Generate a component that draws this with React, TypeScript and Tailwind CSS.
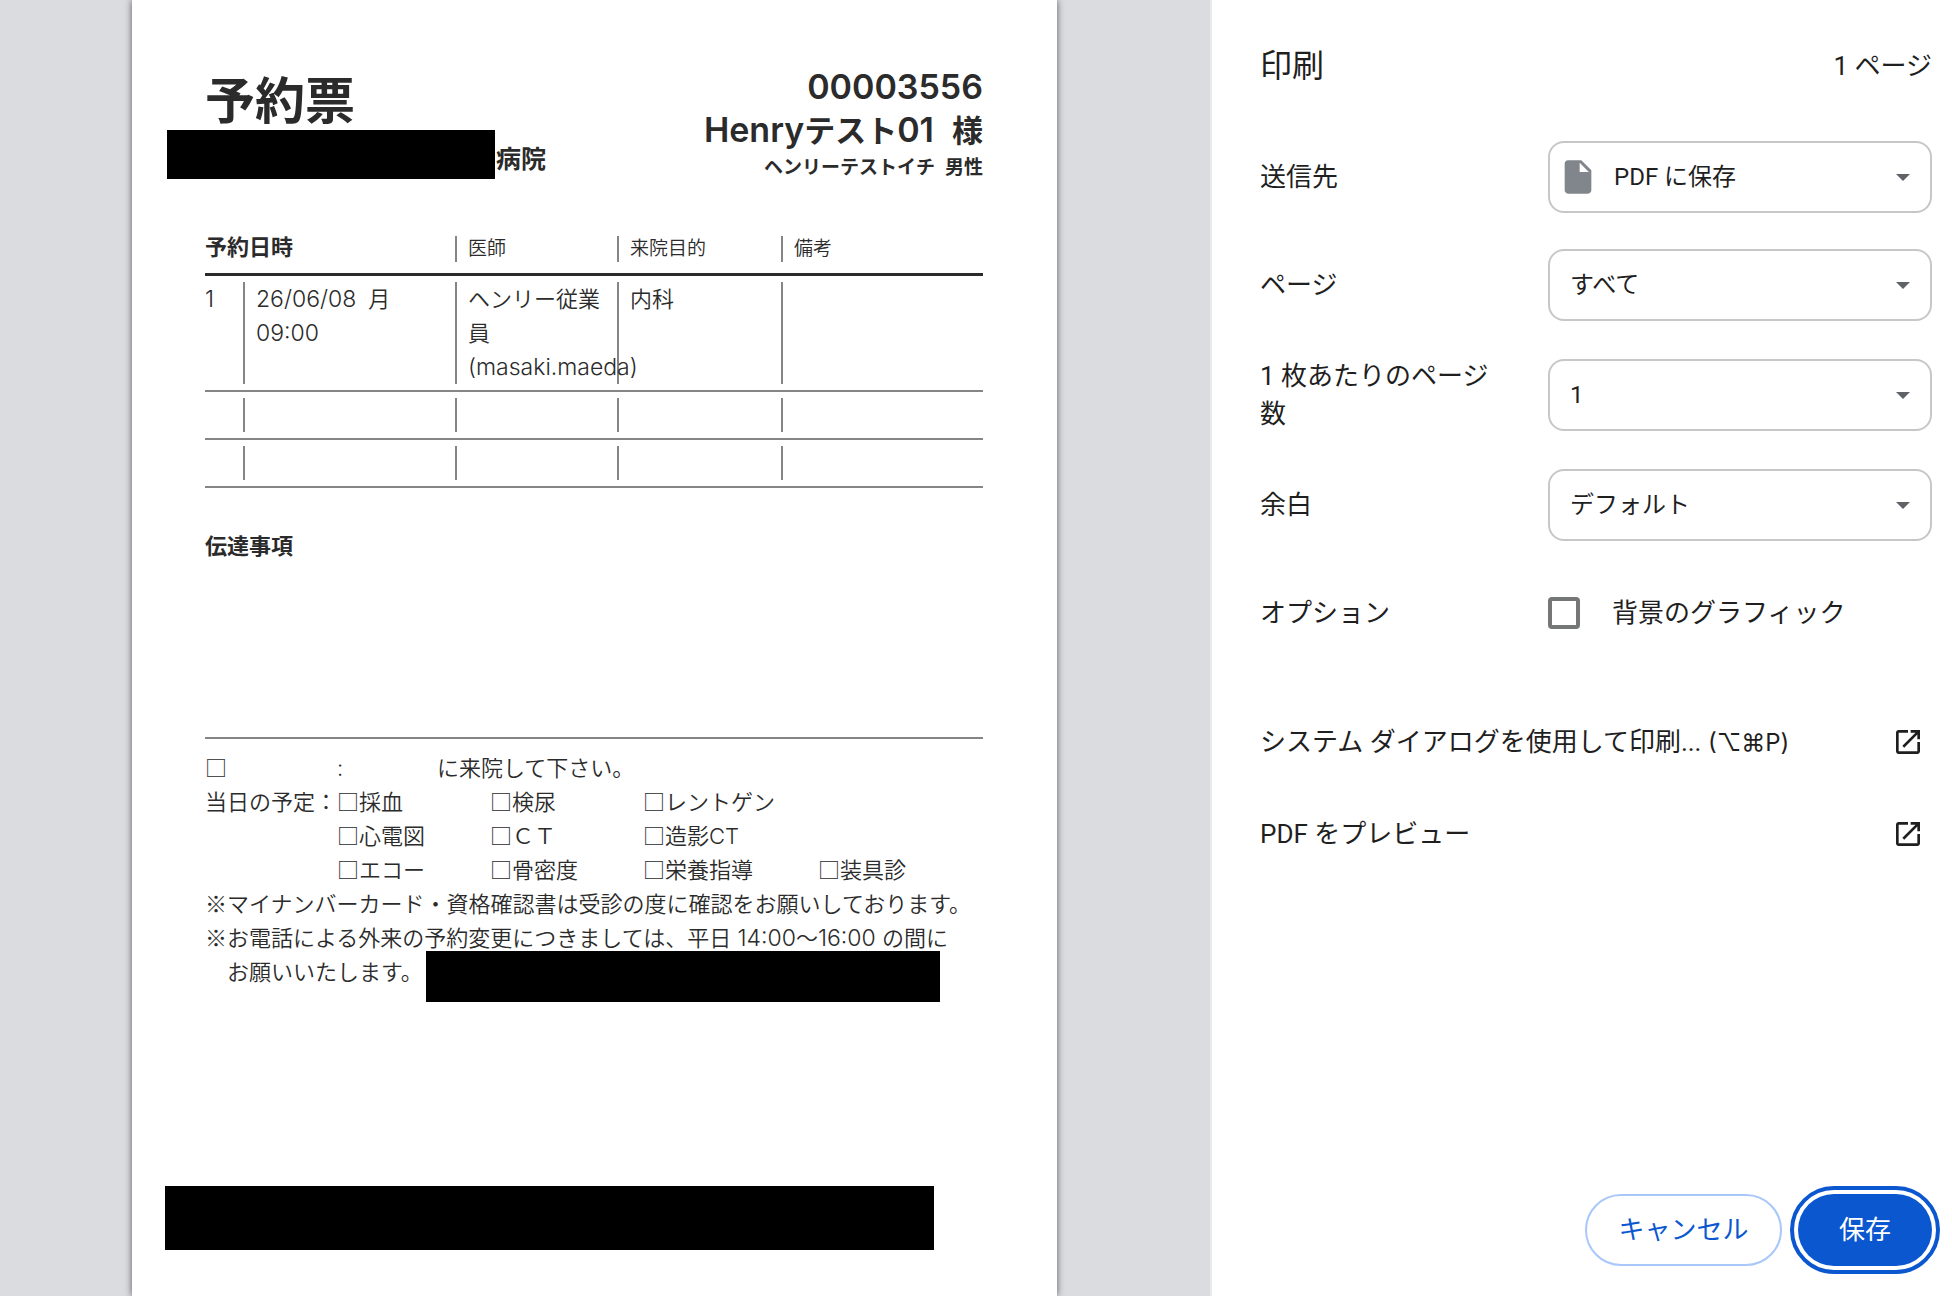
import { useState } from 'react'

const planRows = [
  ['採血', '検尿', 'レントゲン'],
  ['心電図', 'ＣＴ', '造影CT'],
  ['エコー', '骨密度', '栄養指導', '装具診'],
]

const planGrid = 'grid grid-cols-[132px_153px_153px_175px_auto] whitespace-nowrap'

// 帳票の英数字
function Latin({ children }: { children: React.ReactNode }) {
  return <span className="text-[23px] leading-none">{children}</span>
}

// □ や ※ などの全角記号
function Mark({ children }: { children: React.ReactNode }) {
  return <span className="font-['Noto_Sans_CJK_JP',sans-serif] leading-none">{children}</span>
}

function Cell({ children }: { children?: React.ReactNode }) {
  return (
    <td className="h-px py-[6px] align-top">
      <div className="h-full min-h-[34px] border-l-2 border-[#858585] pl-[11px]">{children}</div>
    </td>
  )
}

function HeadCell({ children }: { children: React.ReactNode }) {
  return (
    <th className="pb-[11px] text-left text-[19px] font-[350] leading-[26px]">
      <div className="border-l-2 border-[#858585] pl-[11px]">{children}</div>
    </th>
  )
}

function Ticket() {
  return (
    <article className="flex min-h-screen w-[925px] flex-col bg-white pt-[65px] pr-[74px] pb-[46px] pl-[73px] font-['Inter','Noto_Sans_CJK_JP',sans-serif] text-[22px] font-[350] leading-[34px] text-[#2b2b2b] shadow-[0_0_7px_rgba(0,0,0,0.6)]">
      <header className="flex justify-between font-bold">
        <div>
          <h1 className="h-[65px] text-[50px] leading-[72px]">予約票</h1>
          <div className="-ml-[38px] flex items-end">
            <div className="h-[49px] w-[328px] bg-black" />
            <span className="pl-px text-[25px] leading-[40px]">病院</span>
          </div>
        </div>
        <div className="text-right font-semibold">
          <p className="text-[34px] leading-[43px]">00003556</p>
          <p className="text-[34px] leading-[43px]">
            Henry<span className="text-[31px] font-bold">テスト</span>01
            <span className="ml-[18px] text-[31px] font-bold">様</span>
          </p>
          <p className="flex justify-end gap-[10px] text-[19px] font-bold leading-[32px]">
            <span>ヘンリーテストイチ</span>
            <span>男性</span>
          </p>
        </div>
      </header>

      {/* 予約一覧 */}
      <table className="mt-[52px] w-full table-fixed border-collapse">
        <colgroup>
          <col className="w-[38px]" />
          <col className="w-[212px]" />
          <col className="w-[162px]" />
          <col className="w-[164px]" />
          <col />
        </colgroup>
        <thead>
          <tr className="border-b-3 border-[#2b2b2b]">
            <th colSpan={2} className="text-left align-top font-bold leading-[22px]">予約日時</th>
            <HeadCell>医師</HeadCell>
            <HeadCell>来院目的</HeadCell>
            <HeadCell>備考</HeadCell>
          </tr>
        </thead>
        <tbody>
          <tr className="border-b-2 border-[#858585]">
            <td className="py-[6px] align-top"><Latin>1</Latin></td>
            <Cell>
              <Latin>26/06/08</Latin>
              <span className="ml-3">月</span>
              <br />
              <Latin>09:00</Latin>
            </Cell>
            <Cell>
              ヘンリー従業員<Latin>(masaki.maeda)</Latin>
            </Cell>
            <Cell>内科</Cell>
            <Cell />
          </tr>
          {[2, 3].map((row) => (
            <tr key={row} className="border-b-2 border-[#858585]">
              <td />
              <Cell />
              <Cell />
              <Cell />
              <Cell />
            </tr>
          ))}
        </tbody>
      </table>

      <section className="mt-[41px] h-[210px] border-b-2 border-[#858585]">
        <h2 className="font-bold">伝達事項</h2>
      </section>

      {/* 当日の案内 */}
      <section className="pt-[12px]">
        <div className="grid grid-cols-[132px_100px_auto]">
          <span><Mark>□</Mark></span>
          <span>:</span>
          <span>に来院して下さい。</span>
        </div>
        {planRows.map((items, i) => (
          <div key={i} className={planGrid}>
            <span>{i === 0 ? '当日の予定：' : ''}</span>
            {items.map((item) => (
              <span key={item}><Mark>□</Mark>{item}</span>
            ))}
          </div>
        ))}
        <p className="whitespace-nowrap">
          <Mark>※</Mark>マイナンバーカード・資格確認書は受診の度に確認をお願いしております。
        </p>
        <p className="whitespace-nowrap">
          <Mark>※</Mark>お電話による外来の予約変更につきましては、平日 <Latin>14:00</Latin>〜<Latin>16:00</Latin> の間に
        </p>
        <div className="flex items-start">
          <span className="w-[221px] whitespace-nowrap pl-[22px]">お願いいたします。</span>
          <div className="-mt-1 h-[51px] w-[514px] shrink-0 bg-black" />
        </div>
      </section>

      <div className="-ml-[40px] mt-auto h-[64px] w-[769px] bg-black" />
    </article>
  )
}

type FieldProps = {
  id: string
  label: string
  options: string[]
  icon?: React.ReactNode
}

function SelectField({ id, label, options, icon }: FieldProps) {
  return (
    <div className="flex items-center justify-between">
      <label htmlFor={id} className="w-[236px] leading-[38px]">{label}</label>
      <div className="relative w-[384px]">
        {icon}
        <select
          id={id}
          className={`h-[72px] w-full appearance-none rounded-2xl border-2 border-[#c7c7c7] bg-white text-2xl ${
            icon ? 'pl-[64px]' : 'pl-[20px]'
          }`}
        >
          {options.map((option) => (
            <option key={option}>{option}</option>
          ))}
        </select>
        <svg viewBox="0 0 14 7" className="pointer-events-none absolute top-[33px] right-[22px] h-[7px] w-[14px] fill-[#5f6368]">
          <path d="M0 0h14L7 7z" />
        </svg>
      </div>
    </div>
  )
}

function FileIcon() {
  return (
    <svg viewBox="0 0 24 24" className="pointer-events-none absolute top-4 left-[10px] size-10 fill-[#80868b]">
      <path d="M6 2c-1.1 0-1.99.9-1.99 2L4 20c0 1.1.89 2 1.99 2H18c1.1 0 2-.9 2-2V8l-6-6H6zm7 7V3.5L18.5 9H13z" />
    </svg>
  )
}

function LinkRow({ children }: { children: React.ReactNode }) {
  return (
    <button className="flex h-[92px] w-full items-center justify-between pr-2 text-left">
      <span>{children}</span>
      <svg viewBox="0 0 24 24" className="size-8 fill-[#1f1f1f]">
        <path d="M19 19H5V5h7V3H5c-1.11 0-2 .9-2 2v14c0 1.1.89 2 2 2h14c1.1 0 2-.9 2-2v-7h-2v7zM14 3v2h3.59l-9.83 9.83 1.41 1.41L19 6.41V10h2V3h-7z" />
      </svg>
    </button>
  )
}

export default function App() {
  const [background, setBackground] = useState(false)

  return (
    <div className="flex min-h-screen bg-[#dadce0]">
      {/* プレビュー */}
      <main className="flex flex-1 justify-center pr-[21px]">
        <Ticket />
      </main>

      {/* 印刷設定 */}
      <aside className="flex w-[742px] shrink-0 flex-col border-l-2 border-[#e8eaed] bg-white pt-[36px] pr-[20px] pb-[30px] pl-[48px] font-['Roboto','Noto_Sans_CJK_JP','DejaVu_Sans',sans-serif] text-[26px] text-[#1f1f1f]">
        <div className="flex h-[60px] items-center justify-between">
          <h1 className="text-[32px]">印刷</h1>
          <span>1 ページ</span>
        </div>

        <div className="mt-[45px] flex flex-col gap-9">
          <SelectField id="destination" label="送信先" options={['PDF に保存']} icon={<FileIcon />} />
          <SelectField id="pages" label="ページ" options={['すべて']} />
          <SelectField id="per-sheet" label="1 枚あたりのページ数" options={['1', '2', '4']} />
          <SelectField id="margin" label="余白" options={['デフォルト', 'なし']} />
          <div className="flex h-[72px] items-center justify-between">
            <span>オプション</span>
            <label className="flex w-[384px] items-center gap-8">
              <input
                type="checkbox"
                checked={background}
                onChange={(e) => setBackground(e.target.checked)}
                className="size-8 appearance-none rounded-sm border-4 border-[#747775] checked:bg-[#0b57d0]"
              />
              背景のグラフィック
            </label>
          </div>
        </div>

        <div className="mt-[47px]">
          <LinkRow>
            システム ダイアログを使用して印刷...{' '}
            <span className="font-['Inter','DejaVu_Sans',sans-serif] text-2xl">(⌥⌘P)</span>
          </LinkRow>
          <LinkRow>PDF をプレビュー</LinkRow>
        </div>

        <div className="mt-auto flex justify-end gap-4">
          <button className="h-[72px] w-[197px] rounded-full border-2 border-[#a8c7fa] text-[#0b57d0]">
            キャンセル
          </button>
          <button className="h-[72px] w-[134px] rounded-full bg-[#0b57d0] text-white outline-4 outline-offset-4 outline-[#0b57d0]">
            保存
          </button>
        </div>
      </aside>
    </div>
  )
}
